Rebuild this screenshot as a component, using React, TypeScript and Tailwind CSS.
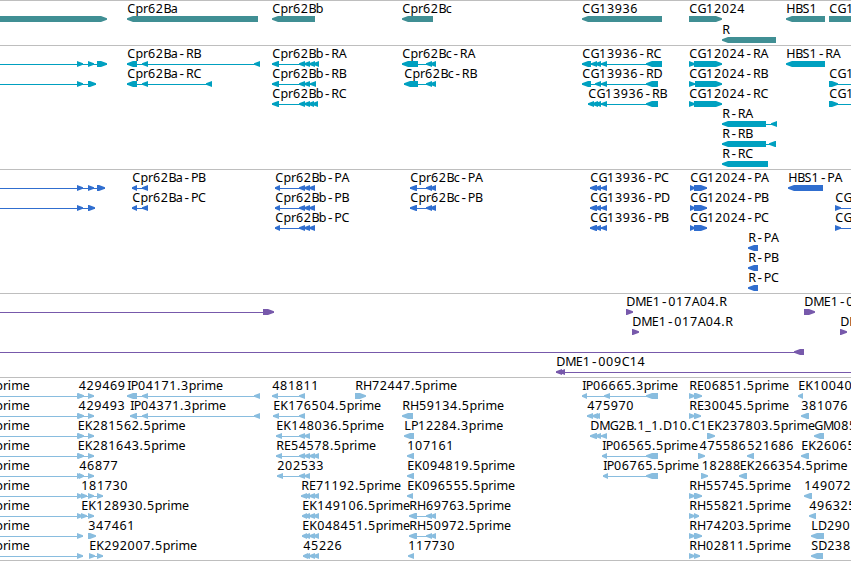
import { FC } from "react";

type Span = [number, number];

interface Feature {
    row: number;
    dir: "left" | "right";
    exons: Span[];
    label?: string;
    // label start, when it differs from the first exon
    labelX?: number;
}

interface TrackData {
    name: string;
    className: string;
    height: number;
    // centre of the first row of glyphs, from the top of the track
    offset: number;
    pitch: number;
    features: Feature[];
}

const WIDTH = 851;
const HEAD = 6;

// spans that continue outside the visible region
const BEFORE = -20;
const AFTER = 880;

const genes: Feature[] = [
    { row: 0, dir: "right", exons: [[BEFORE, 107]] },
    { row: 0, dir: "left", exons: [[127, 258]], label: "Cpr62Ba" },
    { row: 0, dir: "left", exons: [[272, 315]], label: "Cpr62Bb" },
    { row: 0, dir: "left", exons: [[402, 433]], label: "Cpr62Bc" },
    { row: 0, dir: "left", exons: [[582, 662]], label: "CG13936" },
    { row: 0, dir: "right", exons: [[689, 722]], label: "CG12024" },
    { row: 0, dir: "left", exons: [[786, 825]], label: "HBS1" },
    { row: 0, dir: "right", exons: [[829, AFTER]], label: "CG1" },
    { row: 1, dir: "left", exons: [[722, 776]], label: "R" },
];

const transcripts: Feature[] = [
    { row: 0, dir: "right", exons: [[BEFORE, BEFORE], [77, 83], [88, 94], [97, 107]] },
    { row: 1, dir: "right", exons: [[BEFORE, BEFORE], [77, 83], [88, 96]] },
    { row: 0, dir: "left", exons: [[127, 137], [142, 148], [254, 260]], label: "Cpr62Ba-RB" },
    { row: 1, dir: "left", exons: [[127, 137], [142, 148], [206, 212]], label: "Cpr62Ba-RC" },
    { row: 0, dir: "left", exons: [[272, 279], [299, 305], [304, 310], [309, 315], [313, 319]], label: "Cpr62Bb-RA" },
    { row: 1, dir: "left", exons: [[272, 279], [299, 305], [304, 310], [310, 316]], label: "Cpr62Bb-RB" },
    { row: 2, dir: "left", exons: [[272, 279], [299, 305], [304, 310], [308, 314], [312, 318]], label: "Cpr62Bb-RC" },
    { row: 0, dir: "left", exons: [[402, 418], [426, 432], [430, 436]], label: "Cpr62Bc-RA" },
    { row: 1, dir: "left", exons: [[404, 418], [426, 432], [430, 436]], label: "Cpr62Bc-RB" },
    { row: 0, dir: "left", exons: [[582, 591], [591, 597], [595, 601], [601, 607], [646, 662]], label: "CG13936-RC" },
    { row: 1, dir: "left", exons: [[582, 591], [595, 601], [601, 607], [646, 658]], label: "CG13936-RD" },
    { row: 2, dir: "left", exons: [[588, 594], [592, 598], [595, 601], [601, 607], [646, 658]], label: "CG13936-RB" },
    { row: 0, dir: "right", exons: [[689, 695], [694, 722]], label: "CG12024-RA" },
    { row: 1, dir: "right", exons: [[689, 695], [695, 722]], label: "CG12024-RB" },
    { row: 2, dir: "right", exons: [[689, 695], [694, 722]], label: "CG12024-RC" },
    { row: 0, dir: "left", exons: [[786, 825]], label: "HBS1-RA" },
    { row: 1, dir: "right", exons: [[829, 838], [AFTER, AFTER]], label: "CG1" },
    { row: 2, dir: "right", exons: [[829, 838], [AFTER, AFTER]], label: "CG1" },
    { row: 3, dir: "left", exons: [[722, 766], [771, 777]], label: "R-RA" },
    { row: 4, dir: "left", exons: [[722, 766], [769, 776]], label: "R-RB" },
    { row: 5, dir: "left", exons: [[722, 768]], label: "R-RC" },
];

const proteins: Feature[] = [
    { row: 0, dir: "right", exons: [[BEFORE, BEFORE], [77, 83], [88, 94], [97, 105]] },
    { row: 1, dir: "right", exons: [[BEFORE, BEFORE], [77, 83], [88, 95]] },
    { row: 0, dir: "left", exons: [[132, 137], [142, 148]], label: "Cpr62Ba-PB" },
    { row: 1, dir: "left", exons: [[132, 137], [142, 148]], label: "Cpr62Ba-PC" },
    { row: 0, dir: "left", exons: [[275, 280], [299, 305], [304, 310], [309, 315]], label: "Cpr62Bb-PA" },
    { row: 1, dir: "left", exons: [[275, 280], [299, 305], [304, 310], [309, 315]], label: "Cpr62Bb-PB" },
    { row: 2, dir: "left", exons: [[275, 280], [299, 305], [304, 310], [309, 315]], label: "Cpr62Bb-PC" },
    { row: 0, dir: "left", exons: [[410, 417], [426, 432], [430, 436]], label: "Cpr62Bc-PA" },
    { row: 1, dir: "left", exons: [[410, 417], [426, 432], [430, 436]], label: "Cpr62Bc-PB" },
    { row: 0, dir: "left", exons: [[590, 597], [595, 601], [601, 607]], label: "CG13936-PC" },
    { row: 1, dir: "left", exons: [[590, 597], [595, 601], [601, 607]], label: "CG13936-PD" },
    { row: 2, dir: "left", exons: [[590, 597], [595, 601], [601, 607]], label: "CG13936-PB" },
    { row: 0, dir: "right", exons: [[690, 695], [694, 707]], label: "CG12024-PA" },
    { row: 1, dir: "right", exons: [[690, 695], [694, 707]], label: "CG12024-PB" },
    { row: 2, dir: "right", exons: [[690, 695], [694, 707]], label: "CG12024-PC" },
    { row: 0, dir: "left", exons: [[788, 823]], label: "HBS1-PA" },
    { row: 1, dir: "right", exons: [[835, 841], [AFTER, AFTER]], label: "CG" },
    { row: 2, dir: "right", exons: [[835, 841], [AFTER, AFTER]], label: "CG" },
    { row: 3, dir: "left", exons: [[748, 758]], label: "R-PA" },
    { row: 4, dir: "left", exons: [[748, 758]], label: "R-PB" },
    { row: 5, dir: "left", exons: [[748, 758]], label: "R-PC" },
];

const clones: Feature[] = [
    { row: 0, dir: "right", exons: [[BEFORE, BEFORE], [263, 274]] },
    { row: 0, dir: "right", exons: [[626, 633]], label: "DME1-017A04.R" },
    { row: 1, dir: "right", exons: [[632, 639]], label: "DME1-017A04.R" },
    { row: 0, dir: "right", exons: [[804, 815]], label: "DME1-0" },
    { row: 1, dir: "right", exons: [[840, 847]], label: "DM" },
    { row: 2, dir: "left", exons: [[BEFORE, BEFORE], [794, 804]] },
    { row: 3, dir: "left", exons: [[556, 562], [559, 565], [AFTER, AFTER]], label: "DME1-009C14" },
];

const ests: Feature[] = [
    // the long ones that enter from the left, only the end of the name shows
    ...[0, 1, 2, 3, 4, 5, 6, 7, 8].map((row): Feature => ({
        row,
        dir: "right",
        exons: [[BEFORE, BEFORE], [77, 83]],
        label: "prime",
        labelX: -5,
    })),
    { row: 0, dir: "right", exons: [[78, 84], [88, 94]], label: "429469", labelX: 78.5 },
    { row: 1, dir: "right", exons: [[78, 84], [88, 94]], label: "429493", labelX: 78.3 },
    { row: 2, dir: "right", exons: [[78, 84], [88, 94]], label: "EK281562.5prime", labelX: 77.5 },
    { row: 3, dir: "right", exons: [[78, 84], [88, 94]], label: "EK281643.5prime", labelX: 77.5 },
    { row: 4, dir: "right", exons: [[79, 84], [88, 94]], label: "46877" },
    { row: 5, dir: "right", exons: [[81, 87], [88, 94], [97, 103]], label: "181730" },
    { row: 6, dir: "right", exons: [[81, 87], [88, 94]], label: "EK128930.5prime" },
    { row: 7, dir: "right", exons: [[88, 96]], label: "347461" },
    { row: 8, dir: "right", exons: [[89, 95], [97, 103]], label: "EK292007.5prime" },
    { row: 0, dir: "left", exons: [[127, 137], [142, 148], [254, 260]], label: "IP04171.3prime" },
    { row: 1, dir: "left", exons: [[130, 137], [142, 148], [254, 260]], label: "IP04371.3prime" },

    { row: 0, dir: "left", exons: [[272, 278], [299, 305]], label: "481811" },
    { row: 1, dir: "left", exons: [[273, 279], [299, 305]], label: "EK176504.5prime" },
    { row: 2, dir: "left", exons: [[276, 282], [299, 305], [304, 310]], label: "EK148036.5prime" },
    { row: 3, dir: "left", exons: [[276, 282], [299, 305], [304, 310], [309, 315], [313, 319]], label: "RE54578.5prime" },
    { row: 4, dir: "left", exons: [[277, 283], [299, 305], [304, 310]], label: "202533" },
    { row: 5, dir: "left", exons: [[301, 307], [304, 310], [309, 315], [313, 319]], label: "RE71192.5prime" },
    { row: 6, dir: "left", exons: [[302, 307], [304, 310], [309, 315], [313, 319]], label: "EK149106.5prime" },
    { row: 7, dir: "left", exons: [[302, 307], [304, 310], [309, 315], [313, 319]], label: "EK048451.5prime" },
    { row: 8, dir: "left", exons: [[303, 308], [304, 310], [309, 315], [313, 319]], label: "45226" },

    { row: 0, dir: "right", exons: [[355, 366]], label: "RH72447.5prime" },
    { row: 1, dir: "left", exons: [[402, 413]], label: "RH59134.5prime" },
    { row: 2, dir: "left", exons: [[404, 414]], label: "LP12284.3prime" },
    { row: 3, dir: "left", exons: [[407, 414]], label: "107161" },
    { row: 4, dir: "left", exons: [[407, 414]], label: "EK094819.5prime" },
    { row: 5, dir: "left", exons: [[407, 413]], label: "EK096555.5prime" },
    { row: 6, dir: "left", exons: [[409, 417], [426, 432], [430, 436]], label: "RH69763.5prime" },
    { row: 7, dir: "left", exons: [[409, 417], [426, 432], [430, 436]], label: "RH50972.5prime" },
    { row: 8, dir: "left", exons: [[408, 414]], label: "117730" },

    { row: 0, dir: "left", exons: [[582, 587], [604, 610], [646, 658]], label: "IP06665.3prime" },
    { row: 1, dir: "left", exons: [[587, 593], [592, 598], [594, 600]], label: "475970" },
    { row: 2, dir: "left", exons: [[590, 597], [595, 601], [601, 607]], label: "DMG2B.1_1.D10.C1" },
    { row: 3, dir: "left", exons: [[602, 607], [646, 658]], label: "IP06565.5prime" },
    { row: 4, dir: "left", exons: [[603, 608], [646, 658]], label: "IP06765.5prime" },

    { row: 0, dir: "right", exons: [[689, 695], [694, 702]], label: "RE06851.5prime" },
    { row: 1, dir: "right", exons: [[689, 695], [694, 701]], label: "RE30045.5prime" },
    { row: 2, dir: "right", exons: [[707, 715]], label: "EK237803.5prime" },
    { row: 3, dir: "right", exons: [[698, 705]], label: "475586", labelX: 699.3 },
    { row: 3, dir: "left", exons: [[747, 754]], label: "521686", labelX: 747 },
    { row: 4, dir: "right", exons: [[701, 708]], label: "18288", labelX: 701.5 },
    { row: 4, dir: "left", exons: [[739, 747]], label: "EK266354.5prime", labelX: 739.5 },
    { row: 5, dir: "right", exons: [[689, 695], [694, 702]], label: "RH55745.5prime" },
    { row: 6, dir: "right", exons: [[689, 695], [694, 699]], label: "RH55821.5prime" },
    { row: 7, dir: "right", exons: [[689, 695], [694, 702]], label: "RH74203.5prime" },
    { row: 8, dir: "right", exons: [[689, 695], [694, 700]], label: "RH02811.5prime" },

    { row: 0, dir: "left", exons: [[798, 803]], label: "EK10040" },
    { row: 1, dir: "left", exons: [[801, 809]], label: "381076" },
    { row: 2, dir: "left", exons: [[814, 824]], label: "GM085" },
    { row: 3, dir: "left", exons: [[801, 809]], label: "EK26065" },
    { row: 5, dir: "left", exons: [[804, 812]], label: "149072" },
    { row: 6, dir: "left", exons: [[809, 816]], label: "496325" },
    { row: 7, dir: "left", exons: [[811, 824]], label: "LD290" },
    { row: 8, dir: "left", exons: [[811, 823]], label: "SD238" },
];

const tracks: TrackData[] = [
    { name: "Genes", className: "text-[#408f94]", height: 45, offset: 18, pitch: 21, features: genes },
    { name: "Transcripts", className: "text-[#00a0c0]", height: 124, offset: 18, pitch: 20, features: transcripts },
    { name: "Proteins", className: "text-[#306ecf]", height: 124, offset: 18, pitch: 20, features: proteins },
    { name: "Clones", className: "text-[#7759ab]", height: 84, offset: 18, pitch: 20, features: clones },
    { name: "ESTs", className: "text-[#89bddf]", height: 183, offset: 18, pitch: 20, features: ests },
];

// label advances in px, anything missing is a digit's width
const DIGIT = 7.8;
const ADVANCE: Record<string, number> = {
    "-": 7.8, ".": 3.9, _: 6,
    A: 8, B: 7.3, C: 8.1, D: 9, E: 7, G: 8.7, H: 9, I: 3.5, K: 7.9,
    L: 6.6, M: 10.4, P: 7.2, R: 7.6, S: 7,
    a: 7.3, b: 7.6, c: 6.2, e: 7.3, i: 3.4, m: 11.5, p: 7.6, r: 4.9,
};

const Label: FC<{ text: string; x: number; y: number }> = ({ text, x, y }) => {
    let next = x + 0.3;
    const xs = [...text].map((char) => {
        const at = next;
        next += ADVANCE[char] ?? DIGIT;
        return at.toFixed(1);
    });
    const [head, tail] = text.split("-");

    // the monospaced hyphen is the wider one
    return (
        <text x={xs.join(" ")} y={y} className="fill-black">
            {head}
            {tail && <tspan className="font-['Liberation_Mono',monospace]">-</tspan>}
            {tail}
        </text>
    );
};

// arrow heads have a blunt, 2px high tip
const exonPoints = ([start, end]: Span, y: number, dir: Feature["dir"]) => {
    const head = Math.min(HEAD, end - start);
    return dir === "left"
        ? `${start},${y - 0.8} ${start + head},${y - 3} ${end},${y - 3} ${end},${y + 3} ${start + head},${y + 3} ${start},${y + 0.8}`
        : `${start},${y - 3} ${end - head},${y - 3} ${end},${y - 0.8} ${end},${y + 0.8} ${end - head},${y + 3} ${start},${y + 3}`;
};

const Glyph: FC<{ feature: Feature; y: number }> = ({ feature, y }) => {
    const { exons, dir, label } = feature;
    const start = exons[0][0];
    const end = exons[exons.length - 1][1];

    return (
        <g>
            {exons.length > 1 && <rect x={start} y={y} width={end - start} height={1} fill="currentColor" />}
            {exons.filter(([a, b]) => b > a).map((exon, i) => (
                <polygon key={i} points={exonPoints(exon, y, dir)} fill="currentColor" />
            ))}
            {label && <Label text={label} x={feature.labelX ?? start} y={y - 6} />}
        </g>
    );
};

const Track: FC<{ track: TrackData }> = ({ track }) => (
    <section className={`border-t border-[#bebebe] ${track.className}`} style={{ height: track.height }}>
        <svg width={WIDTH} height={track.height - 1} className="block overflow-hidden" aria-label={track.name}>
            {track.features.map((feature, i) => (
                <Glyph key={i} feature={feature} y={track.offset + feature.row * track.pitch} />
            ))}
        </svg>
    </section>
);

const App: FC = () => {
    return (
        <main className="flex h-[561px] w-[851px] flex-col overflow-hidden border-b border-[#bebebe] bg-white font-['Noto_Sans',sans-serif] text-[12.5px]">
            {tracks.map((track) => (
                <Track key={track.name} track={track} />
            ))}
        </main>
    );
};

export default App;
